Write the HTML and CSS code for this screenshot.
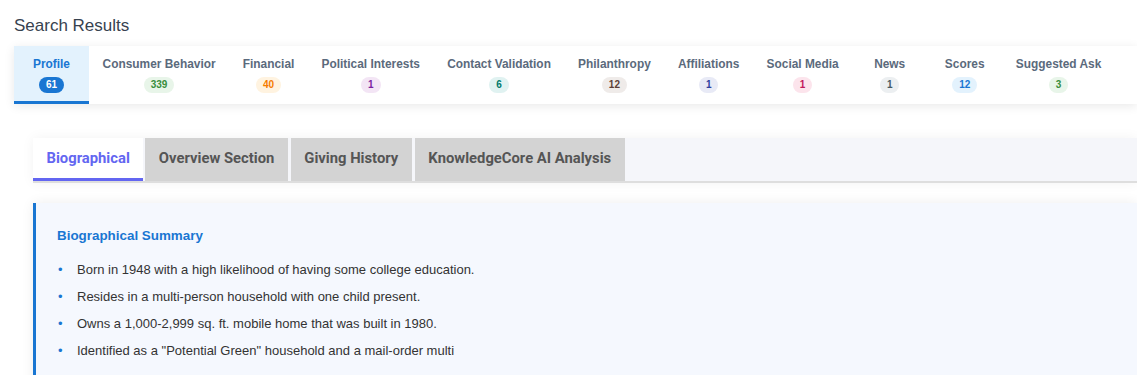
FILE: index.html
```html
<!DOCTYPE html>
<html lang="en">
<head>
    <meta charset="UTF-8">
    <meta name="viewport" content="width=device-width, initial-scale=1.0">
    <title>Search Results</title>
    <link rel="stylesheet" href="styles.css">
</head>
<body>
    <div class="page">
        <h2 class="page-title">Search Results</h2>

        <div class="result-tabs">
            <div class="result-tab active">
                <span class="tab-label">Profile</span>
                <span class="badge badge-profile">61</span>
            </div>
            <div class="result-tab">
                <span class="tab-label">Consumer Behavior</span>
                <span class="badge badge-green">339</span>
            </div>
            <div class="result-tab">
                <span class="tab-label">Financial</span>
                <span class="badge badge-orange">40</span>
            </div>
            <div class="result-tab">
                <span class="tab-label">Political Interests</span>
                <span class="badge badge-purple">1</span>
            </div>
            <div class="result-tab">
                <span class="tab-label">Contact Validation</span>
                <span class="badge badge-teal">6</span>
            </div>
            <div class="result-tab">
                <span class="tab-label">Philanthropy</span>
                <span class="badge badge-brown">12</span>
            </div>
            <div class="result-tab">
                <span class="tab-label">Affiliations</span>
                <span class="badge badge-indigo">1</span>
            </div>
            <div class="result-tab">
                <span class="tab-label">Social Media</span>
                <span class="badge badge-pink">1</span>
            </div>
            <div class="result-tab">
                <span class="tab-label">News</span>
                <span class="badge badge-grey">1</span>
            </div>
            <div class="result-tab">
                <span class="tab-label">Scores</span>
                <span class="badge badge-blue">12</span>
            </div>
            <div class="result-tab">
                <span class="tab-label">Suggested Ask</span>
                <span class="badge badge-green">3</span>
            </div>
        </div>

        <div class="detail-panel">
            <div class="section-tabs">
                <div class="section-tab active">Biographical</div>
                <div class="section-tab">Overview Section</div>
                <div class="section-tab">Giving History</div>
                <div class="section-tab">KnowledgeCore AI Analysis</div>
            </div>

            <div class="summary-card">
                <h3 class="summary-title">Biographical Summary</h3>
                <ul class="summary-list">
                    <li>Born in 1948 with a high likelihood of having some college education.</li>
                    <li>Resides in a multi-person household with one child present.</li>
                    <li>Owns a 1,000-2,999 sq. ft. mobile home that was built in 1980.</li>
                    <li>Identified as a "Potential Green" household and a mail-order multi</li>
                </ul>
            </div>
        </div>
    </div>
</body>
</html>
```

FILE: styles.css
```css
* {
    margin: 0;
    padding: 0;
    box-sizing: border-box;
}
body {
    font-family: "Liberation Sans", Arial, sans-serif;
    background-color: #fff;
    overflow: hidden;
}
.page {
    padding: 16px 0 0 14px;
}
.page-title {
    font-size: 17px;
    font-weight: normal;
    line-height: 20px;
    color: #37424f;
    margin-bottom: 10px;
}

/* top result tabs */
.result-tabs {
    display: flex;
    background-color: #fff;
    box-shadow: 0 2px 10px rgba(0, 0, 0, 0.09);
}
.result-tab {
    display: flex;
    flex-direction: column;
    align-items: center;
    min-width: 75px;
    padding: 11px 13.6px 8px;
    border-bottom: 3px solid transparent;
    color: #5b6a7c;
    cursor: pointer;
}
.result-tab.active {
    background-color: #e3f2fd;
    border-bottom-color: #1976d2;
    color: #1976d2;
}
.tab-label {
    font-size: 11.9px;
    font-weight: bold;
    line-height: 14px;
    white-space: nowrap;
}
.badge {
    margin-top: 6px;
    padding: 2px 7px;
    font-size: 10px;
    font-weight: bold;
    line-height: 12px;
    border-radius: 10px;
}
.badge-profile { background-color: #1976d2; color: #fff; }
.badge-green { background-color: #e8f5e9; color: #388e3c; }
.badge-orange { background-color: #fff3e0; color: #f57c00; }
.badge-purple { background-color: #f3e5f5; color: #7b1fa2; }
.badge-teal { background-color: #e0f2f1; color: #00796b; }
.badge-brown { background-color: #efebe9; color: #5d4037; }
.badge-indigo { background-color: #e8eaf6; color: #303f9f; }
.badge-pink { background-color: #fce4ec; color: #c2185b; }
.badge-grey { background-color: #eceff1; color: #455a64; }
.badge-blue { background-color: #e3f2fd; color: #1976d2; }

/* section tabs + content */
.detail-panel {
    padding: 34px 0 0 19px;
}
.section-tabs {
    display: flex;
    gap: 3px;
    height: 45px;
    background-color: #f5f6fa;
    border-bottom: 2px solid #dedede;
    box-shadow: 0 0 12px rgba(0, 0, 0, 0.05);
}
.section-tab {
    display: flex;
    align-items: center;
    padding: 0 13.5px;
    background-color: #d3d3d3;
    border-bottom: 3px solid transparent;
    font-family: Roboto, "Liberation Sans", sans-serif;
    font-size: 14.8px;
    font-weight: bold;
    color: #555;
    white-space: nowrap;
    cursor: pointer;
}
.section-tab.active {
    background-color: #fff;
    color: #6366f1;
    border-bottom-color: #6366f1;
    margin-right: -1px;
}

.summary-card {
    margin-top: 20px;
    padding: 25px 21px 20px;
    min-height: 200px;
    background-color: #f5f8fe;
    border-left: 3px solid #1976d2;
    box-shadow: 0 0 12px rgba(0, 0, 0, 0.07);
}
.summary-title {
    font-size: 13.4px;
    font-weight: bold;
    line-height: 16px;
    color: #1976d2;
    margin-bottom: 16px;
}
.summary-list {
    list-style: none;
}
.summary-list li {
    display: flex;
    font-size: 13px;
    line-height: 19px;
    color: #333;
    margin-bottom: 8px;
}
.summary-list li::before {
    content: "•";
    flex: 0 0 19px;
    padding-left: 1px;
    color: #1976d2;
}
```
